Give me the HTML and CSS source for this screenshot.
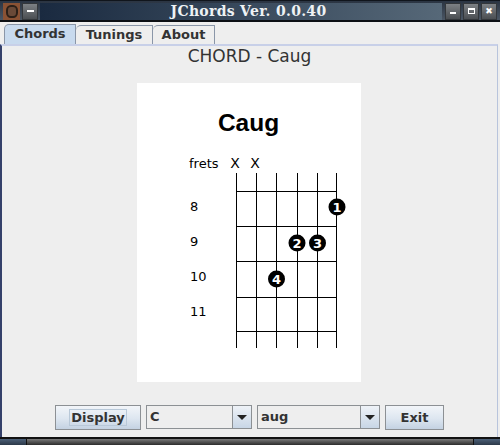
FILE: index.html
```html
<!DOCTYPE html>
<html lang="en">
<head>
    <meta charset="UTF-8">
    <title>JChords Ver. 0.0.40</title>
    <link rel="stylesheet" href="styles.css">
</head>
<body>
    <div class="window">
        <header class="titlebar">
            <div class="app-icon"><span class="app-icon-inner"></span></div>
            <div class="wm-btn wm-menu"><span class="glyph-menu"></span></div>
            <h1 class="title">JChords Ver. 0.0.40</h1>
            <div class="wm-btn"><span class="glyph-min"></span></div>
            <div class="wm-btn"><span class="glyph-max"></span></div>
            <div class="wm-btn"><span class="glyph-close">✖</span></div>
        </header>

        <nav class="tabs">
            <a class="tab tab-active">Chords</a>
            <a class="tab tab-second">Tunings</a>
            <a class="tab tab-third">About</a>
        </nav>

        <main class="panel">
            <h2 class="chord-heading">CHORD - Caug</h2>

            <div class="chord-sheet">
                <svg class="chord-svg" width="224" height="299" viewBox="137 83 224 299">
                    <text class="chord-name" x="248.5" y="131" text-anchor="middle">Caug</text>
                    <text class="small" x="189" y="168">frets</text>
                    <text class="mute" x="235" y="168" text-anchor="middle">X</text>
                    <text class="mute" x="255" y="168" text-anchor="middle">X</text>

                    <g class="grid">
                        <path d="M236.5 173V348M256.5 173V348M276.5 173V348M297.5 173V348M317.5 173V348M336.5 173V348"/>
                        <path d="M236 191.5H337M236 226.5H337M236 261.5H337M236 297.5H337M236 331.5H337"/>
                    </g>

                    <text class="small" x="190" y="211">8</text>
                    <text class="small" x="190" y="246">9</text>
                    <text class="small" x="190" y="281">10</text>
                    <text class="small" x="190" y="316">11</text>

                    <circle cx="337" cy="207" r="8.5"/>
                    <text class="finger" x="337" y="211.5" text-anchor="middle">1</text>
                    <circle cx="297" cy="243" r="8.5"/>
                    <text class="finger" x="297" y="247.5" text-anchor="middle">2</text>
                    <circle cx="317.5" cy="243" r="8.5"/>
                    <text class="finger" x="317.5" y="247.5" text-anchor="middle">3</text>
                    <circle cx="276.5" cy="279" r="8.5"/>
                    <text class="finger" x="276.5" y="283.5" text-anchor="middle">4</text>
                </svg>
            </div>

            <div class="controls">
                <button class="btn btn-display"><span class="focus">Display</span></button>
                <div class="combo combo-root">
                    <span class="combo-value">C</span>
                    <span class="combo-arrow"></span>
                </div>
                <div class="combo combo-type">
                    <span class="combo-value">aug</span>
                    <span class="combo-arrow"></span>
                </div>
                <button class="btn btn-exit">Exit</button>
            </div>
        </main>

        <footer class="bottombar">
            <span class="grip"></span>
            <span class="bottom-fill"></span>
            <span class="grip grip-right"></span>
        </footer>
    </div>
</body>
</html>
```

FILE: styles.css
```css
html, body {
    margin: 0;
    padding: 0;
}

body {
    width: 500px;
    height: 445px;
    overflow: hidden;
    font-family: "DejaVu Sans", sans-serif;
    background-color: #eeeeee;
    color: #333;
}

.window {
    display: flex;
    flex-direction: column;
    height: 445px;
}

/* Title bar */
.titlebar {
    display: flex;
    align-items: center;
    flex-shrink: 0;
    gap: 2px;
    height: 22px;
    padding: 1px 3px 0 3px;
    box-sizing: border-box;
    background: linear-gradient(#2a3442, #4a5664);
    border-top: 1px solid #10151c;
    border-bottom: 2px solid #0c0f14;
}

.app-icon {
    display: flex;
    align-items: center;
    justify-content: center;
    width: 17px;
    height: 17px;
    background-color: #8a5234;
}

.app-icon-inner {
    width: 12px;
    height: 13px;
    border-radius: 40%;
    background-color: #6a4a38;
    border: 2px solid #2c2018;
    box-sizing: border-box;
}

.wm-btn {
    display: flex;
    align-items: center;
    justify-content: center;
    width: 16px;
    height: 17px;
    background: linear-gradient(#7c8084, #4a4e52);
    border: 1px solid #33373b;
    box-sizing: border-box;
    color: #fff;
}

.glyph-menu {
    width: 7px;
    height: 2px;
    background-color: #fff;
}

.glyph-min {
    width: 6px;
    height: 2px;
    margin-top: 3px;
    background-color: #fff;
}

.glyph-max {
    width: 7px;
    height: 6px;
    border: 1px solid #fff;
    border-top-width: 2px;
    box-sizing: border-box;
}

.glyph-close {
    font-size: 9px;
    line-height: 1;
}

.title {
    flex: 1;
    height: 17px;
    margin: 0 1px 0 0;
    padding-left: 15px;
    box-sizing: border-box;
    line-height: 17px;
    font-family: "DejaVu Serif", serif;
    font-size: 14px;
    font-weight: bold;
    letter-spacing: 0.3px;
    text-align: center;
    color: #eef2f4;
    background: linear-gradient(90deg, #1a2a40, #566878);
}

/* Tabs */
.tabs {
    display: flex;
    align-items: flex-end;
    flex-shrink: 0;
    height: 22px;
    padding: 2px 0 0 4px;
    box-sizing: border-box;
    background-color: #eeeeee;
}

.tab {
    display: block;
    height: 19px;
    line-height: 18px;
    font-size: 13px;
    font-weight: bold;
    color: #333;
    text-align: center;
    background-color: #eeeeee;
    border: 1px solid #8a96a8;
    border-bottom: none;
    border-left: none;
    border-radius: 5px 0 0 0;
    box-sizing: border-box;
}

.tab-active {
    width: 72px;
    height: 20px;
    background-color: #c8daee;
    border-left: 1px solid #8a96a8;
}

.tab-second {
    width: 77px;
}

.tab-third {
    width: 62px;
}

/* Main panel */
.panel {
    flex: 1;
    display: flex;
    flex-direction: column;
    align-items: center;
    margin: 0 2px 0 0;
    padding-left: 1px;
    border-left: 2px solid #34406a;
    border-right: 1px solid #b8c4dc;
    border-top: 2px solid #c8d0e8;
    background-color: #eeeeee;
}

.chord-heading {
    height: 19px;
    margin: 1px 1px 0 0;
    line-height: 19px;
    font-size: 17px;
    font-weight: normal;
    color: #333;
}

.chord-sheet {
    width: 224px;
    height: 299px;
    margin: 17px 2px 0 0;
    background-color: #fff;
}

.chord-svg {
    display: block;
    font-family: "DejaVu Sans", sans-serif;
}

.chord-name {
    font-family: "Liberation Sans", Arial, sans-serif;
    font-size: 24.5px;
    font-weight: bold;
    fill: #000;
}

.small {
    font-size: 13px;
    fill: #000;
}

.mute {
    font-size: 14px;
    fill: #000;
}

.grid path {
    stroke: #000;
    stroke-width: 1;
    fill: none;
}

.finger {
    font-size: 13px;
    font-weight: bold;
    fill: #fff;
}

/* Bottom controls */
.controls {
    display: flex;
    align-items: flex-start;
    height: 26px;
    margin-top: 23px;
    padding-right: 1px;
}

.btn {
    height: 25px;
    padding: 0;
    font-family: "DejaVu Sans", sans-serif;
    font-size: 13px;
    font-weight: bold;
    color: #333;
    background: linear-gradient(#f2f5f9, #dde6f0 55%, #c4d2e2);
    border: 1px solid #8c9094;
}

.btn-display {
    width: 86px;
    margin-right: 5px;
}

.btn-exit {
    width: 59px;
    margin-left: 5px;
}

.focus {
    display: inline-block;
    padding: 0 1px;
    border: 1px solid #b8c8d8;
    line-height: 15px;
}

.combo {
    display: flex;
    height: 24px;
    background-color: #eeeeee;
    border: 1px solid #8c9094;
    box-sizing: border-box;
}

.combo-root {
    width: 106px;
    margin-right: 5px;
}

.combo-type {
    width: 123px;
}

.combo-value {
    flex: 1;
    padding: 3px 0 0 3px;
    font-size: 13px;
    font-weight: bold;
    color: #333;
    border-right: 1px solid #8c9094;
}

.combo-arrow {
    position: relative;
    width: 18px;
    background: linear-gradient(#eef2f7, #c8d6e6);
}

.combo-arrow::after {
    content: "";
    position: absolute;
    left: 4px;
    top: 9px;
    border-left: 5px solid transparent;
    border-right: 5px solid transparent;
    border-top: 5px solid #222;
}

/* Bottom window frame */
.bottombar {
    display: flex;
    flex-shrink: 0;
    height: 8px;
    border-top: 2px solid #111;
    background: linear-gradient(#7a7a7a, #2c2c2c);
    box-sizing: border-box;
}

.grip {
    width: 26px;
    background: linear-gradient(#4c6078, #2c3848);
    border-right: 1px solid #111;
}

.bottom-fill {
    flex: 1;
}

.grip-right {
    border-right: none;
    border-left: 1px solid #111;
}
```
